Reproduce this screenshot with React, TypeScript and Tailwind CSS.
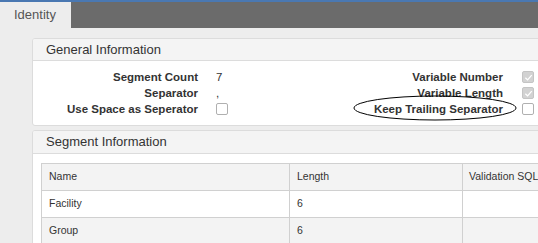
import React from "react";

type Row = { name: string; length: string; sql: string };

const rows: Row[] = [
	{ name: "Facility", length: "6", sql: "" },
	{ name: "Group", length: "6", sql: "" },
];

const Checkbox = ({ checked }: { checked?: boolean }) => {
	if (checked) {
		return (
			<span className="flex h-[12px] w-[12px] items-center justify-center rounded-[2px] border border-[#c4c4c4] bg-[#d2d2d2]">
				<svg width="9" height="9" viewBox="0 0 10 10" fill="none">
					<path d="M1.5 5.2 L4 7.6 L8.6 2.4" stroke="#ffffff" strokeWidth="1.4" />
				</svg>
			</span>
		);
	}
	return <span className="block h-[12px] w-[12px] rounded-[2px] border border-[#b0b0b0] bg-white" />;
};

const FormRow = ({
	label,
	value,
	rightLabel,
	rightChecked,
}: {
	label: string;
	value: React.ReactNode;
	rightLabel: string;
	rightChecked?: boolean;
}) => (
	<div className="flex h-[16px] items-center leading-[16px]">
		<div className="w-[165px] text-right text-[11.5px] font-bold text-[#333]">{label}</div>
		<div className="ml-[18px] flex w-[137px] items-center text-[11.5px] text-[#333]">{value}</div>
		<div className="w-[150px] text-right text-[11.5px] font-bold text-[#333]">{rightLabel}</div>
		<div className="ml-[19px] flex items-center">
			<Checkbox checked={rightChecked} />
		</div>
	</div>
);

const App = () => {
	return (
		<div
			className="h-[243px] w-[538px] overflow-hidden bg-[#ededed]"
			style={{ fontFamily: '"Liberation Sans", Arial, sans-serif' }}
		>
			<div className="h-[2px] bg-[#4a78b2]" />
			<div className="flex h-[26px]">
				<div className="flex w-[71px] items-center bg-[#ededed] pl-[14px] text-[13px] text-[#555]">
					Identity
				</div>
				<div className="flex-1 bg-[#6b6b6b]" />
			</div>

			<div className="flex flex-col gap-[4px] pl-[32px] pt-[10px]">
				{/* general info */}
				<div className="w-[540px] overflow-hidden rounded-[3px] border border-[#dcdcdc] bg-white">
					<div className="flex h-[22px] items-center border-b border-[#dcdcdc] bg-[#f4f4f4] pl-[13px] text-[13px] text-[#333]">
						General Information
					</div>
					<div className="relative h-[64px] pt-[8px]">
						<FormRow label="Segment Count" value="7" rightLabel="Variable Number" rightChecked />
						<FormRow label="Separator" value="," rightLabel="Variable Length" rightChecked />
						<FormRow
							label="Use Space as Seperator"
							value={<Checkbox />}
							rightLabel="Keep Trailing Separator"
						/>
						<svg
							className="absolute left-[320px] top-[34px]"
							width="164"
							height="26"
							viewBox="0 0 164 26"
							fill="none"
						>
							<ellipse cx="82" cy="13" rx="81" ry="12" stroke="#000" strokeWidth="1" />
						</svg>
					</div>
				</div>

				{/* segment info */}
				<div className="w-[540px] overflow-hidden rounded-[3px] border border-[#dcdcdc] bg-white">
					<div className="flex h-[23px] items-center border-b border-[#dcdcdc] bg-[#f4f4f4] pl-[13px] text-[13px] text-[#333]">
						Segment Information
					</div>
					<div className="pl-[8px] pt-[9px]">
						<table className="w-[560px] table-fixed border-collapse text-[10.5px] text-[#333]">
							<colgroup>
								<col className="w-[248px]" />
								<col className="w-[173px]" />
								<col />
							</colgroup>
							<thead>
								<tr className="h-[27px] bg-[#f3f3f3]">
									<th className="border border-[#d0d0d0] px-[7px] text-left font-normal">Name</th>
									<th className="border border-[#d0d0d0] px-[7px] text-left font-normal">Length</th>
									<th className="border border-[#d0d0d0] px-[6px] text-left font-normal">Validation SQL</th>
								</tr>
							</thead>
							<tbody>
								{rows.map((row, i) => (
									<tr key={row.name} className={i % 2 === 0 ? "h-[27px] bg-white" : "h-[27px] bg-[#f3f3f3]"}>
										<td className="border border-[#d0d0d0] px-[7px]">{row.name}</td>
										<td className="border border-[#d0d0d0] px-[7px]">{row.length}</td>
										<td className="border border-[#d0d0d0] px-[6px]">{row.sql}</td>
									</tr>
								))}
							</tbody>
						</table>
					</div>
				</div>
			</div>
		</div>
	);
};

export default App;
